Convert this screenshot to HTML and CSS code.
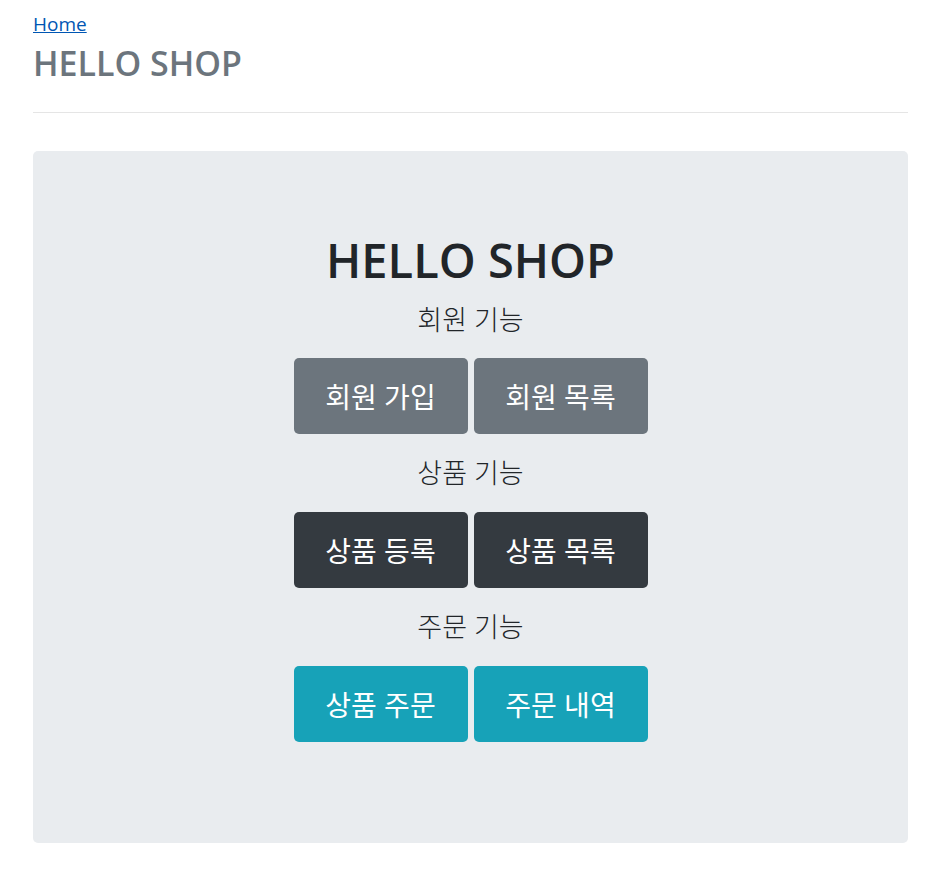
FILE: index.html
```html
<!DOCTYPE html>
<html lang="ko">
<head>
    <meta charset="UTF-8">
    <meta name="viewport" content="width=device-width, initial-scale=1.0">
    <title>HELLO SHOP</title>
    <link rel="stylesheet" href="styles.css">
</head>
<body>
    <div class="container">
        <div class="header">
            <a href="#" class="home-link">Home</a>
            <h3 class="brand">HELLO SHOP</h3>
        </div>

        <div class="jumbotron">
            <h1 class="display">HELLO SHOP</h1>

            <p class="lead">회원 기능</p>
            <div class="btn-row">
                <a href="#" class="btn btn-secondary">회원 가입</a>
                <a href="#" class="btn btn-secondary">회원 목록</a>
            </div>

            <p class="lead">상품 기능</p>
            <div class="btn-row">
                <a href="#" class="btn btn-dark">상품 등록</a>
                <a href="#" class="btn btn-dark">상품 목록</a>
            </div>

            <p class="lead">주문 기능</p>
            <div class="btn-row">
                <a href="#" class="btn btn-info">상품 주문</a>
                <a href="#" class="btn btn-info">주문 내역</a>
            </div>
        </div>
    </div>
</body>
</html>
```

FILE: styles.css
```css
/* Reset default styles */
* {
  box-sizing: border-box;
  margin: 0;
  padding: 0;
}

body {
  font-family: "Open Sans", "Noto Sans CJK KR", sans-serif;
  background-color: #fff;
  color: #212529;
}

.container {
  width: 875px;
  margin-left: 33px;
}

/* Header */
.header {
  padding-top: 10px;
  padding-bottom: 28px;
  border-bottom: 1px solid #e5e5e5;
}

.home-link {
  display: block;
  width: max-content;
  font-size: 19px;
  line-height: 28px;
  color: #0056b3;
  text-decoration: underline;
}

.brand {
  margin-top: 5px;
  font-size: 34px;
  font-weight: 600;
  line-height: 1.2;
  color: #6c757d;
}

/* Jumbotron */
.jumbotron {
  margin-top: 38px;
  padding: 81px 32px 101px;
  background-color: #e9ecef;
  border-radius: 5px;
  text-align: center;
}

.display {
  font-size: 47px;
  font-weight: 600;
  line-height: 1.2;
  color: #212529;
}

.lead {
  margin-top: 16px;
  margin-bottom: 22px;
  font-size: 27px;
  font-weight: 300;
  line-height: 32px;
}

.btn-row + .lead {
  margin-top: 23px;
  margin-bottom: 23px;
}

.btn-row {
  display: flex;
  justify-content: center;
  gap: 6px;
}

.btn {
  display: flex;
  align-items: center;
  justify-content: center;
  width: 174px;
  height: 76px;
  font-size: 28px;
  font-weight: 400;
  color: #fff;
  text-decoration: none;
  border-radius: 5px;
}

.btn-secondary {
  background-color: #6c757d;
}

.btn-dark {
  background-color: #343a40;
}

.btn-info {
  background-color: #17a2b8;
}
```
